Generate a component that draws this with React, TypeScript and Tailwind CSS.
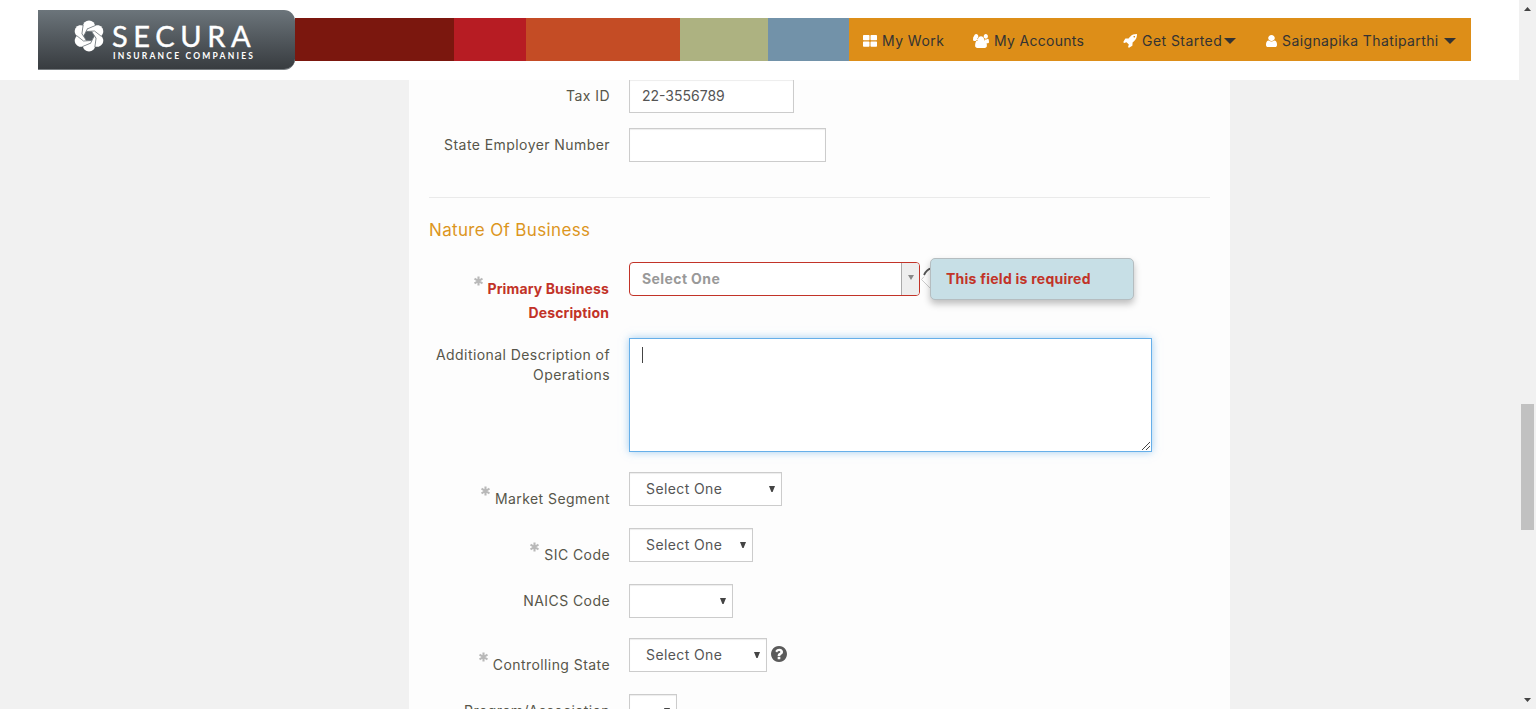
import type { ReactNode } from 'react';

const USERS =
  'M593 640q-162 5-265 128h-134q-82 0-138-40.5t-56-118.5q0-353 124-353 6 0 43.5 21t97.5 42.5 119 21.5q67 0 133-23-5 37-5 66 0 139 81 256zm1071 637q0 120-73 189.5t-194 69.5h-874q-121 0-194-69.5t-73-189.5q0-53 3.5-103.5t14-109 26.5-108.5 43-97.5 62-81 85.5-53.5 111.5-20q10 0 43 21.5t73 48 107 48 135 21.5 135-21.5 107-48 73-48 43-21.5q61 0 111.5 20t85.5 53.5 62 81 43 97.5 26.5 108.5 14 109 3.5 103.5zm-1024-1021q0 106-75 181t-181 75-181-75-75-181 75-181 181-75 181 75 75 181zm704 384q0 159-112.5 271.5t-271.5 112.5-271.5-112.5-112.5-271.5 112.5-271.5 271.5-112.5 271.5 112.5 112.5 271.5zm576 225q0 78-56 118.5t-138 40.5h-134q-103-123-265-128 81-117 81-256 0-29-5-66 66 23 133 23 59 0 119-21.5t97.5-42.5 43.5-21q124 0 124 353zm-128-609q0 106-75 181t-181 75-181-75-75-181 75-181 181-75 181 75 75 181z';
const ROCKET =
  'M1440 320q0-40-28-68t-68-28-68 28-28 68 28 68 68 28 68-28 28-68zm224-288q0 249-75.5 430.5t-253.5 360.5q-81 80-195 176l-20 379q-2 16-16 26l-384 224q-7 4-16 4-12 0-23-9l-64-64q-13-14-8-32l85-276-281-281-276 85q-3 1-9 1-14 0-23-9l-64-64q-17-19-5-39l224-384q10-14 26-16l379-20q96-114 176-195 188-187 358-258t431-71q14 0 24 9.5t10 22.5z';
const USER =
  'M1280 1271q0 109-62.5 187t-150.5 78h-854q-88 0-150.5-78t-62.5-187q0-85 8.5-160.5t31.5-152 58.5-131 94-89 134.5-34.5q131 128 313 128t313-128q76 0 134.5 34.5t94 89 58.5 131 31.5 152 8.5 160.5zm-256-887q0 159-112.5 271.5t-271.5 112.5-271.5-112.5-112.5-271.5 112.5-271.5 271.5-112.5 271.5 112.5 112.5 271.5z';
const TURNS = [0, 60, 120, 180, 240, 300];

function Caret() {
  return (
    <svg className="h-[6px] w-[12px] shrink-0" viewBox="0 0 12 6">
      <path d="M0 0h12L6 6z" fill="#333" />
    </svg>
  );
}

function Emblem() {
  return (
    <svg className="mt-[10px] h-[32px] w-[30px] shrink-0" viewBox="-15 -16 30 32">
      {TURNS.map((a) => (
        <circle key={a} transform={`rotate(${a})`} cy="-9.300" r="6.200" fill="#fff" />
      ))}
      {TURNS.map((a) => (
        <path key={a} transform={`rotate(${a})`} d="M-2.600 -4.500L5.500 -5L12.500 0.500" fill="none" stroke="#7b8287" strokeWidth="0.9" />
      ))}
      <path d="M-2.600 -4.500H2.600L5.200 0L2.600 4.500H-2.600L-5.200 0Z" fill="#535b61" />
    </svg>
  );
}

function Header() {
  return (
    <header className="flex h-20 shrink-0 bg-white pl-[38px]">
      <div className="mt-[10px] flex h-[60px] w-[257px] rounded-r-[11px] border-b border-[#777c80] bg-linear-to-b from-[#6c757b] to-[#383c40] pl-[36px] text-white">
        <Emblem />
        <div className="flex flex-col pl-[8px] pt-[10px] font-['Lato',sans-serif]">
          <span className="h-[31px] w-[160px] whitespace-nowrap text-[29px] leading-[31px] tracking-[5.600px] [-webkit-text-stroke:0.4px_white]">SECURA</span>
          <span className="pl-px whitespace-nowrap text-[8.500px] leading-[11px] font-bold tracking-[2.200px]">INSURANCE COMPANIES</span>
        </div>
      </div>
      <nav className="mt-[18px] flex h-[43px] w-[1176px] text-[14px] text-[#333]">
        <div className="w-[159px] bg-[#7b170e]" />
        <div className="w-[72px] bg-[#b71c23]" />
        <div className="w-[154px] bg-[#c44c25]" />
        <div className="w-[88px] bg-[#adb281]" />
        <div className="w-[81px] bg-[#7292a9]" />
        <div className="flex w-[622px] items-center whitespace-nowrap bg-[#dd8e18] pt-[3px]">
          <a className="flex w-[110px] items-center pl-[14px]">
            <svg className="mr-[5px] h-[12px] w-[14px]" viewBox="0 0 14 12" fill="#fff">
              <rect width="6.500" height="5.300" rx="0.7" />
              <rect x="7.500" width="6.500" height="5.300" rx="0.7" />
              <rect y="6.400" width="6.500" height="5.300" rx="0.7" />
              <rect x="7.500" y="6.400" width="6.500" height="5.300" rx="0.7" />
            </svg>
            <span className="-mt-[2px] tracking-[0.45px]">My Work</span>
          </a>
          <a className="flex w-[149px] items-center pl-[14px]">
            <svg className="mr-[5px] h-[14px] w-[16px]" viewBox="0 0 1920 1536" preserveAspectRatio="none" fill="#fff"><path d={USERS} /></svg>
            <span className="-mt-[2px] tracking-[0.3px]">My Accounts</span>
          </a>
          <a className="flex w-[143px] items-center pl-[15px]">
            <svg className="mr-[5px] h-[14px] w-[14px]" viewBox="0 0 1664 1664" fill="#fff"><path d={ROCKET} /></svg>
            <span className="-mt-[2px] w-[82px] tracking-[0.45px]">Get Started</span>
            <Caret />
          </a>
          <a className="flex items-center pl-[15px]">
            <svg className="mr-[5px] h-[12px] w-[11px]" viewBox="0 0 1280 1536" preserveAspectRatio="none" fill="#fff"><path d={USER} /></svg>
            <span className="-mt-[2px] w-[162px] tracking-[0.4px]">Saignapika Thatiparthi</span>
            <Caret />
          </a>
        </div>
      </nav>
    </header>
  );
}

function Row({ className, label, children }: { className: string; label: ReactNode; children?: ReactNode }) {
  return (
    <div className={`flex shrink-0 ${className}`}>
      <div className="mr-[19px] w-[181px] shrink-0 whitespace-nowrap pt-[7px] text-right leading-5 tracking-[0.43px] text-[#57564a]">{label}</div>
      {children}
    </div>
  );
}

function Required({ children }: { children: ReactNode }) {
  return (
    <div className="flex justify-end gap-[5px]">
      <Star />
      <span className="pt-[10px]">{children}</span>
    </div>
  );
}

function Star() {
  return (
    <svg className="mt-[7px] h-[10px] w-[9px]" viewBox="-4.500 -5 9 10" stroke="#b9b9b9" strokeWidth="2.100">
      <path d="M0 -4.400V4.400M-4 -2.300L4 2.300M-4 2.300L4 -2.300" />
    </svg>
  );
}

function Select({ className, text }: { className: string; text?: string }) {
  return (
    <div className={`flex h-[34px] shrink-0 items-center justify-between border border-[#ccc] bg-white pr-[6px] pl-[16px] text-[#555] shadow-[inset_0_1px_1px_rgba(0,0,0,0.075)] ${className}`}>
      <span className="-mt-[2px] whitespace-nowrap tracking-[0.4px]">{text}</span>
      <svg className="h-[6px] w-[6px]" viewBox="0 0 6 6"><path d="M0 0h6L3.600 6H2.400z" fill="#444" /></svg>
    </div>
  );
}

export default function App() {
  return (
    <div className="flex h-[709px] w-[1536px] overflow-hidden bg-[#f1f1f1] font-['Inter',sans-serif] text-[14px]">
      <div className="flex w-[1519px] flex-col">
        <Header />
        <main className="ml-[409px] flex min-h-0 w-[821px] flex-1 flex-col overflow-hidden bg-[#fdfdfd] px-5">
          <Row className="h-12" label={<div className="-mt-px">Tax ID</div>}>
            <div className="h-[33px] w-[165px] border border-t-0 border-[#ccc] bg-white pl-[12px] leading-[32px] text-[#555] shadow-[inset_0_1px_1px_rgba(0,0,0,0.075)]">22-3556789</div>
          </Row>
          <Row className="h-[69px]" label="State Employer Number">
            <div className="h-[34px] w-[197px] border border-[#ccc] bg-white shadow-[inset_0_1px_1px_rgba(0,0,0,0.075)]" />
          </Row>
          <div className="h-px shrink-0 bg-[#eaeaea]" />
          <h2 className="h-16 shrink-0 pt-[20px] text-[17px] leading-6 tracking-[0.35px] text-[#dc961d]">Nature Of Business</h2>
          <Row
            className="h-[76px]"
            label={
              <div className="flex justify-end gap-[4px] font-bold leading-6 tracking-[0.12px] text-[#c23328]">
                <Star />
                <div className="pt-[8px] pr-px">Primary Business<br />Description</div>
              </div>
            }
          >
            <div className="flex">
              <div className="flex h-[34px] w-[291px] justify-between overflow-hidden rounded-[4px] border border-[#c23328] bg-white pl-[12px] font-bold leading-[32px] text-[#999]">
                <span className="tracking-[0.4px]">Select One</span>
                <div className="flex w-[18px] justify-center border-l border-[#aaa] bg-[#eee] pt-[12px]">
                  <svg className="h-[5px] w-[6px]" viewBox="0 0 6 5"><path d="M0 0h6L3 5z" fill="#888" /></svg>
                </div>
              </div>
              <svg className="mt-[5px] ml-px h-[24px] w-[11px] shrink-0" viewBox="0 0 11 24">
                <path d="M10 2L0.500 12.500L10 22" fill="#fff" />
                <path d="M3 9.700L0.500 12.500L10 22" fill="none" stroke="#ccc" />
                <path d="M3 8C5 4 7 2 10 1.500" fill="none" stroke="#555" strokeWidth="1.800" />
              </svg>
              <div className="-mt-[4px] -ml-[2px] h-[42px] w-[204px] rounded-[5px] border border-[#b5bdc0] bg-[#c7dfe6] pl-[15px] font-bold leading-[40px] tracking-[0.25px] text-[#c23328] shadow-[0_4px_7px_rgba(0,0,0,0.25)]">
                This field is required
              </div>
            </div>
          </Row>
          <Row className="h-[134px]" label={<>Additional Description of<br />Operations</>}>
            <div className="flex h-[114px] w-[523px] items-start justify-between border border-[#66afe9] bg-white pl-[12px] shadow-[0_0_8px_rgba(102,175,233,0.6)]">
              <div className="mt-[8px] h-4 w-px bg-[#444]" />
              <svg className="h-[9px] w-[9px] self-end" viewBox="0 0 9 9" stroke="#444" strokeWidth="1">
                <path d="M0 8L8 0M4 8L8 4" />
              </svg>
            </div>
          </Row>
          <Row className="h-14" label={<Required>Market Segment</Required>}>
            <Select className="w-[153px]" text="Select One" />
          </Row>
          <Row className="h-14" label={<Required>SIC Code</Required>}>
            <Select className="w-[124px]" text="Select One" />
          </Row>
          <Row className="h-[54px]" label="NAICS Code">
            <Select className="w-[104px]" />
          </Row>
          <Row className="h-14" label={<Required>Controlling State</Required>}>
            <div className="flex">
              <Select className="w-[138px]" text="Select One" />
              <svg className="mt-[8px] ml-[4px] h-4 w-4" viewBox="0 0 1536 1536" fill="#5b5b5b">
                <path d="M896 1248v-192q0-14-9-23t-23-9h-192q-14 0-23 9t-9 23v192q0 14 9 23t23 9h192q14 0 23-9t9-23zm256-672q0-88-55.5-163t-138.5-116-170-41q-243 0-371 213-15 24 8 42l132 100q7 6 19 6 16 0 25-12 53-68 86-92 34-24 86-24 48 0 85.500 26t37.500 59q0 38-20 61t-68 45q-63 28-115.500 86.500t-52.500 125.500v36q0 14 9 23t23 9h192q14 0 23-9t9-23q0-19 21.500-49.500t54.500-49.500q32-18 49-28.500t46-35 44.500-48 28-60.500 12.500-81zm384 192q0 209-103 385.500t-279.500 279.500-385.500 103-385.500-103-279.500-279.500-103-385.500 103-385.500 279.500-279.500 385.500-103 385.500 103 279.500 279.500 103 385.500z" />
              </svg>
            </div>
          </Row>
          <Row className="h-14" label="Program/Association">
            <Select className="w-[48px] pl-0!" />
          </Row>
        </main>
      </div>
      <aside className="flex h-full w-[17px] flex-col items-center bg-[#f1f1f1]">
        <svg className="mt-[7px] h-[4px] w-[7px]" viewBox="0 0 7 4"><path d="M0 4L3.500 0L7 4z" fill="#444" /></svg>
        <div className="mt-[393px] h-[126px] w-[13px] bg-[#c1c1c1]" />
        <svg className="mt-[168px] h-[4px] w-[7px]" viewBox="0 0 7 4"><path d="M0 0h7L3.500 4z" fill="#444" /></svg>
      </aside>
    </div>
  );
}
